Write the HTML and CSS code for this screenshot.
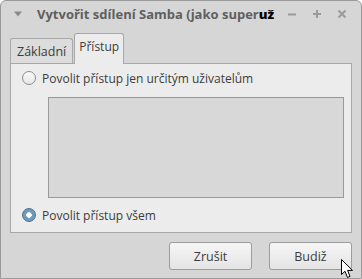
FILE: index.html
```html
<!DOCTYPE html>
<html>
<head>
  <title>Vytvořit sdílení Samba</title>
  <link rel="stylesheet" href="styles.css">
</head>
<body>
  <div class="window">
    <div class="titlebar">
      <svg class="menu-arrow" width="10" height="6" viewBox="0 0 10 6"><path d="M1 0.5 L9 0.5 L5 5.5 Z" fill="#8a8a8a"/></svg>
      <div class="title">Vytvořit sdílení Samba (jako super<b>už</b></div>
      <div class="controls">
        <svg width="10" height="10" viewBox="0 0 10 10"><path d="M1 5.5 H9" stroke="#9a9a9a" stroke-width="2"/></svg>
        <svg width="10" height="10" viewBox="0 0 10 10"><path d="M1 5 H9 M5 1 V9" stroke="#9a9a9a" stroke-width="2"/></svg>
        <svg width="10" height="10" viewBox="0 0 10 10"><path d="M1.5 1.5 L8.5 8.5 M8.5 1.5 L1.5 8.5" stroke="#9a9a9a" stroke-width="2"/></svg>
      </div>
    </div>
    <div class="content">
      <div class="tabs">
        <div class="tab">Základní</div>
        <div class="tab active">Přístup</div>
      </div>
      <div class="panel">
        <label class="option">
          <span class="radio"></span>
          Povolit přístup jen určitým uživatelům
        </label>
        <div class="listbox"></div>
        <label class="option">
          <span class="radio checked"></span>
          Povolit přístup všem
        </label>
      </div>
      <div class="buttons">
        <button class="btn">Zrušit</button>
        <button class="btn">Budiž</button>
      </div>
    </div>
    <svg class="cursor" width="13" height="20" viewBox="0 0 13 20"><path d="M0.5 0.5 L0.5 15.5 L4 12.3 L6.5 18.5 L9 17.4 L6.6 11.4 L11.5 11.4 Z" fill="#fff" stroke="#000" stroke-width="1"/></svg>
  </div>
</body>
</html>
```

FILE: styles.css
```css
body {
  margin: 0;
  padding: 0;
  font-family: "Open Sans", "Noto Sans", sans-serif;
  font-size: 12px;
  color: #3c3c3c;
  background: #fff;
}

.window {
  position: relative;
  width: 360px;
  height: 277px;
  background-color: #d6d6d6;
  border: 1px solid #9a9a9a;
  border-radius: 6px 6px 0 0;
  display: flex;
  flex-direction: column;
}

.titlebar {
  height: 29px;
  display: flex;
  align-items: center;
  padding-left: 12px;
  padding-right: 14px;
}

.menu-arrow {
  margin-right: 14px;
  margin-top: -3px;
}

.title {
  flex: 1;
  font-weight: bold;
  color: #5f5f5f;
  font-size: 13px;
  white-space: nowrap;
  margin-top: -4px;
}

.title b {
  color: #000;
}

.controls {
  display: flex;
  gap: 15px;
  margin-top: -4px;
}

.content {
  padding: 2px 9px 0 9px;
}

.tabs {
  display: flex;
  align-items: flex-end;
  height: 31px;
}

.tab {
  height: 24px;
  line-height: 25px;
  padding: 0 6px;
  background-color: #dcdcdc;
  border: 1px solid #a8a8a8;
  border-bottom: none;
  border-radius: 3px 3px 0 0;
  color: #3c3c3c;
  font-size: 12.5px;
}

.tab.active {
  height: 30px;
  line-height: 26px;
  padding: 0 4px;
  margin-left: 1px;
  font-size: 12px;
  background-color: #ececec;
  margin-bottom: -1px;
  position: relative;
}

.panel {
  height: 168px;
  background-color: #ececec;
  border: 1px solid #a8a8a8;
  padding: 0 7px 0 11px;
}

.option {
  display: flex;
  align-items: center;
  gap: 6px;
  height: 28px;
}

.radio {
  width: 12px;
  height: 12px;
  border: 1px solid #8c8c8c;
  border-radius: 50%;
  background: linear-gradient(#fafafa, #e6e6e6);
}

.radio.checked {
  border-color: #4f7086;
  background: radial-gradient(circle, #fff 0 2.5px, #6c9cbc 3px);
}

.listbox {
  height: 99px;
  margin: 5px 0 3px 26px;
  background-color: #d8d8d8;
  border: 1px solid #999;
}

.buttons {
  display: flex;
  justify-content: flex-end;
  gap: 17px;
  margin-top: 9px;
}

.btn {
  width: 83px;
  height: 28px;
  font-family: "Open Sans", "Noto Sans", sans-serif;
  font-size: 12.5px;
  color: #3c3c3c;
  background: linear-gradient(#f6f6f6, #e4e4e4);
  border: 1px solid #9c9c9c;
  border-radius: 3px;
}

.cursor {
  position: absolute;
  left: 340px;
  top: 258px;
}
```
